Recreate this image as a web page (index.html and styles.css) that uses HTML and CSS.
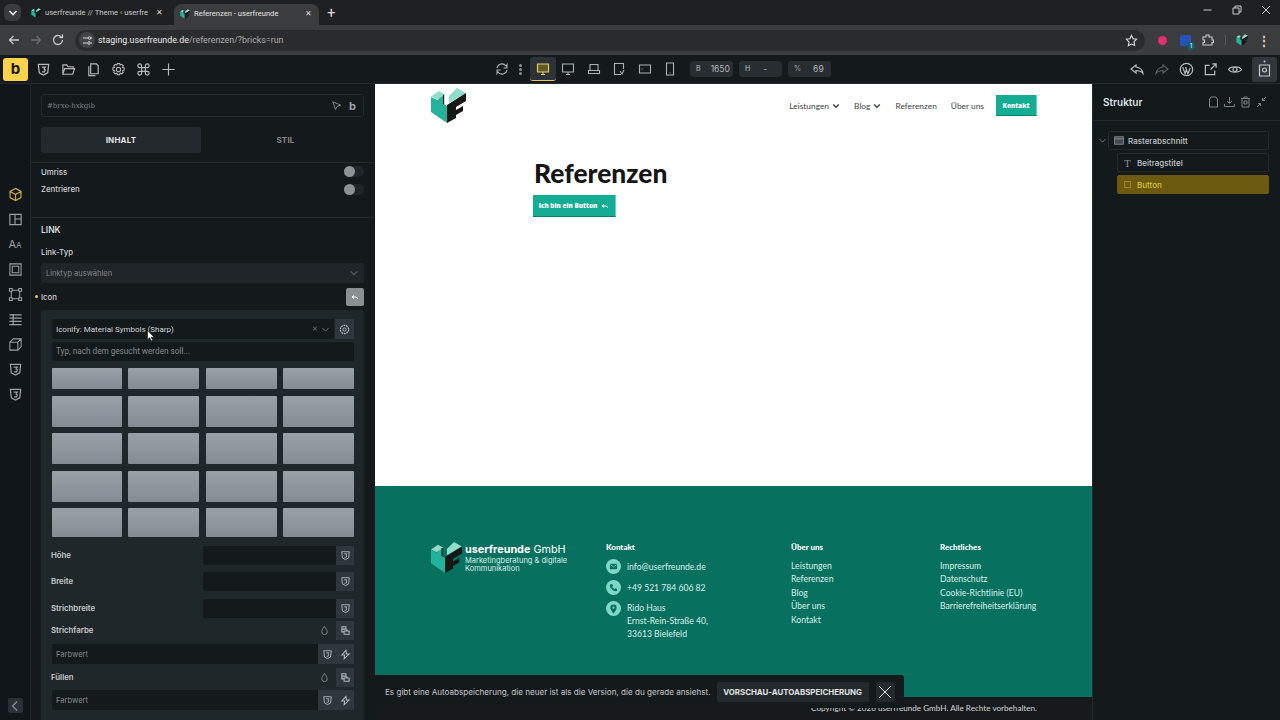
FILE: index.html
```html
<!DOCTYPE html>
<html lang="de">
<head>
    <meta charset="UTF-8">
    <meta name="viewport" content="width=device-width, initial-scale=1.0">
    <title>Referenzen - userfreunde</title>
    <link rel="stylesheet" href="styles.css">
</head>
<body>
    <svg class="defs" xmlns="http://www.w3.org/2000/svg">
        <symbol id="i-shield" viewBox="0 0 16 16"><path d="M2.500 2.500h11l-1 9-4.500 2.500-4.500-2.500z" fill="none" stroke="currentColor" stroke-width="1.300"/><path d="M6 5.500h4l-1.500 2 1.500 1-1 2H6.500" fill="none" stroke="currentColor" stroke-width="1.200"/></symbol>
        <symbol id="i-cube" viewBox="0 0 16 16"><path d="M8 1.500l5.800 3.200v6.600L8 14.500l-5.800-3.200V4.700zM2.200 4.700L8 8l5.800-3.300M8 8v6.500" fill="none" stroke="currentColor" stroke-width="1.300"/></symbol>
        <symbol id="i-chev" viewBox="0 0 10 10"><path d="M1.500 3.200L5 6.800l3.500-3.600" fill="none" stroke="currentColor" stroke-width="1.100"/></symbol>
        <symbol id="i-chev-bold" viewBox="0 0 10 10"><path d="M1.500 3L5 6.500 8.500 3" fill="none" stroke="currentColor" stroke-width="1.700"/></symbol>
        <symbol id="i-drop" viewBox="0 0 12 12"><path d="M6 1.500C4.500 4 3 5.500 3 7.500a3 3 0 0 0 6 0C9 5.500 7.500 4 6 1.500z" fill="none" stroke="currentColor" stroke-width="1"/></symbol>
        <symbol id="i-copy" viewBox="0 0 12 12"><path d="M2 2h4.500v2.500H2zM4.500 6.500h5.500V10H4.500zM2 4.500V7.500h2.500M7.500 4.500V6.500" fill="none" stroke="currentColor" stroke-width="1.100"/></symbol>
        <symbol id="i-bolt" viewBox="0 0 12 12"><path d="M6.500 1.500L2 6.500h3l-.5 4L10 5.500H7z" fill="none" stroke="currentColor" stroke-width="1.100"/></symbol>
        <symbol id="i-logo" viewBox="0 0 36 35"><path d="M1 9v15l16 11V18l-4-2.500V6.500L7.500 12z" fill="#25b29b"/><path d="M1 8.500L9 3l6 3.500-7.500 5z" fill="#8fdccb"/><path d="M13 7l1.200-.6v10.200l-1.200-.7z" fill="#171717"/><path d="M19 8l8-8 9 5-17 10z" fill="#8fdccb"/><path d="M17 35V17L36 5v8L26 19v3l7-4v5l-7 4v3z" fill="#171717"/></symbol>
    </svg>

    <div class="tabstrip">
        <span class="tab-menu"><svg width="10" height="10"><use href="#i-chev-bold"/></svg></span>
        <div class="tab">
            <svg class="favicon" width="10" height="10"><use href="#i-logo"/></svg>
            <span class="tab-title">userfreunde // Theme ‹ userfre</span>
            <span class="tab-close">✕</span>
        </div>
        <div class="tab tab-active">
            <svg class="favicon" width="10" height="10"><use href="#i-logo"/></svg>
            <span class="tab-title">Referenzen - userfreunde</span>
            <span class="tab-close">✕</span>
        </div>
        <span class="tab-new">+</span>
        <div class="win-buttons">
            <svg width="12" height="12" viewBox="0 0 12 12"><path d="M1.500 6h8" stroke="#c9cbcc" fill="none"/></svg>
            <svg width="12" height="12" viewBox="0 0 12 12"><path d="M2 4h6v6H2zM4 4V2h6v6H8" stroke="#c9cbcc" fill="none"/></svg>
            <svg width="12" height="12" viewBox="0 0 12 12"><path d="M2 2l8 8M10 2l-8 8" stroke="#c9cbcc" fill="none"/></svg>
        </div>
    </div>

    <div class="urlbar">
        <svg width="14" height="14" viewBox="0 0 14 14"><path d="M12 7H2.500M6.500 3L2.500 7l4 4" stroke="#c7c9ca" stroke-width="1.300" fill="none"/></svg>
        <svg class="nav-gap" width="14" height="14" viewBox="0 0 14 14"><path d="M2 7h9.500M7.500 3l4 4-4 4" stroke="#6a6c6d" stroke-width="1.300" fill="none"/></svg>
        <svg class="nav-gap" width="14" height="14" viewBox="0 0 14 14"><path d="M11.500 7a4.500 4.500 0 1 1-1.300-3.200M11.500 1.500v3h-3" stroke="#c7c9ca" stroke-width="1.300" fill="none"/></svg>
        <div class="omnibox">
            <span class="site-icon"><svg width="11" height="11" viewBox="0 0 11 11"><path d="M1 3h5M9 8h1M1 8h4M9 3h1" stroke="#d5d6d7" fill="none"/><circle cx="7.500" cy="3" r="1.300" stroke="#d5d6d7" fill="none"/><circle cx="7" cy="8" r="1.300" stroke="#d5d6d7" fill="none"/></svg></span>
            <span class="url"><b>staging.userfreunde.de</b>/referenzen/?bricks=run</span>
            <svg class="star" width="13" height="13" viewBox="0 0 14 14"><path d="M7 1.500l1.700 3.600 3.800.5-2.800 2.700.7 3.900L7 10.800l-3.400 1.900.7-3.900L1.500 5.600l3.800-.5z" stroke="#d8d9da" stroke-width="1.200" fill="none"/></svg>
        </div>
        <div class="ext-icons">
            <span class="ext-pink"></span>
            <span class="ext-blue"><i>1</i></span>
            <svg width="14" height="14" viewBox="0 0 14 14"><path d="M2 4h3V2h3v2h3v3h1.500v2.500H11V12H2V9.500h1.500V7H2z" stroke="#c9cbcc" stroke-width="1.100" fill="none"/></svg>
            <span class="ext-sep"></span>
            <svg width="12" height="12"><use href="#i-logo"/></svg>
            <span class="ext-dots">⋮</span>
        </div>
    </div>

    <div class="builder-bar">
        <div class="bar-left">
            <span class="bricks-logo">b</span>
            <svg class="bar-icon" width="15" height="15"><use href="#i-shield"/></svg>
            <svg class="bar-icon" width="15" height="15" viewBox="0 0 16 16"><path d="M2 13V3h4l1.500 2H13v2M2 13l2-6h10.500l-2 6z" fill="none" stroke="currentColor" stroke-width="1.200"/></svg>
            <svg class="bar-icon" width="15" height="15" viewBox="0 0 16 16"><path d="M5 2h6l2 2v8.500H5zM3 4.500V14.500h7" fill="none" stroke="currentColor" stroke-width="1.200"/></svg>
            <svg class="bar-icon" width="15" height="15" viewBox="0 0 16 16"><circle cx="8" cy="8" r="2.300" fill="none" stroke="currentColor" stroke-width="1.100"/><path d="M6.800 1.500h2.400l.5 1.800 1.700-.8 1.700 1.700-.9 1.700 1.800.5v2.400l-1.800.6.900 1.600-1.700 1.700-1.700-.9-.5 1.800H6.800l-.5-1.800-1.700.9-1.700-1.700.9-1.600-1.800-.6V6.400l1.800-.5-.9-1.700 1.700-1.700 1.700.8z" fill="none" stroke="currentColor" stroke-width="1.100"/></svg>
            <svg class="bar-icon" width="15" height="15" viewBox="0 0 16 16"><path d="M6 6h4v4H6zM6 6H4a2 2 0 1 1 2-2zM10 6V4a2 2 0 1 1 2 2zM10 10h2a2 2 0 1 1-2 2zM6 10v2a2 2 0 1 1-2-2z" fill="none" stroke="currentColor" stroke-width="1.200"/></svg>
            <svg class="bar-icon" width="15" height="15" viewBox="0 0 16 16"><path d="M8 1.500v13M1.500 8h13" fill="none" stroke="currentColor" stroke-width="1.200"/></svg>
        </div>
        <div class="bar-center">
            <svg class="bar-icon-sm" width="14" height="14" viewBox="0 0 14 14"><path d="M2 6a5 5 0 0 1 9-2l1-1.500V6H8.500M12 8a5 5 0 0 1-9 2l-1 1.500V8h3.500" fill="none" stroke="currentColor" stroke-width="1.100"/></svg>
            <span class="dots"><i></i><i></i><i></i></span>
            <span class="device device-active"><svg width="14" height="14" viewBox="0 0 14 14"><path d="M1.500 2h11v8h-11zM5 12.500h4M7 10v2.500" fill="#5f5a2e" stroke="#e8c94e" stroke-width="1.200"/></svg></span>
            <span class="device"><svg width="14" height="14" viewBox="0 0 14 14"><path d="M1.500 2h11v8h-11zM5 12.500h4M7 10v2.500" fill="none" stroke="currentColor" stroke-width="1.100"/></svg></span>
            <span class="device"><svg width="14" height="14" viewBox="0 0 14 14"><path d="M3 2.500h8v6H3zM1.500 8.500h11v3h-11z" fill="none" stroke="currentColor" stroke-width="1.100"/></svg></span>
            <span class="device"><svg width="14" height="14" viewBox="0 0 14 14"><path d="M9 12.500H2.500v-11h9V7M8 9l2 3 2-4" fill="none" stroke="currentColor" stroke-width="1.100"/></svg></span>
            <span class="device"><svg width="14" height="14" viewBox="0 0 14 14"><path d="M1.500 3h11v8h-11zM3.500 7h1" fill="none" stroke="currentColor" stroke-width="1.100"/></svg></span>
            <span class="device"><svg width="14" height="14" viewBox="0 0 14 14"><path d="M3.500 1h7v12h-7zM6.500 11h1" fill="none" stroke="currentColor" stroke-width="1.100"/></svg></span>
            <div class="size-fields">
                <span class="size-field size-b"><em>B</em>1650</span>
                <span class="size-field size-h"><em>H</em><u>-</u></span>
                <span class="size-field size-p"><em>%</em>69</span>
            </div>
        </div>
        <div class="bar-right">
            <svg class="bar-icon" width="16" height="15" viewBox="0 0 16 15"><path d="M7 3L2 7l5 4V8.500c3 0 5 .5 7 3-.5-4-3-6-7-6.500zM7 3" fill="none" stroke="currentColor" stroke-width="1.200"/></svg>
            <svg class="bar-icon bar-dim" width="16" height="15" viewBox="0 0 16 15"><path d="M9 3l5 4-5 4V8.500c-3 0-5 .5-7 3 .5-4 3-6 7-6.500z" fill="none" stroke="currentColor" stroke-width="1.200"/></svg>
            <svg class="bar-icon" width="15" height="15" viewBox="0 0 16 16"><circle cx="8" cy="8" r="6.600" fill="none" stroke="currentColor" stroke-width="1.300"/><path d="M4 5.500l2.500 7 1.500-4.500-1-2.500M7 5.500l2.500 7L12 6.500" fill="none" stroke="currentColor" stroke-width="1.300"/></svg>
            <svg class="bar-icon" width="15" height="15" viewBox="0 0 16 16"><path d="M7 3.500H2.500v10h10V9M8 8l6-6M10 2h4v4" fill="none" stroke="currentColor" stroke-width="1.300"/></svg>
            <svg class="bar-icon" width="16" height="15" viewBox="0 0 16 15"><path d="M1.500 7.500C4 4 12 4 14.500 7.500 12 11 4 11 1.500 7.500z" fill="none" stroke="currentColor" stroke-width="1.200"/><circle cx="8" cy="7.500" r="2" fill="none" stroke="currentColor" stroke-width="1.200"/></svg>
            <span class="structure-toggle"><svg width="15" height="18" viewBox="0 0 15 18"><circle cx="7.500" cy="1.500" r="1" fill="currentColor"/><path d="M2.500 5h10v11h-10z" fill="none" stroke="currentColor" stroke-width="1.200"/><circle cx="7.500" cy="10" r="2" fill="none" stroke="currentColor" stroke-width="1.200"/></svg></span>
        </div>
    </div>

    <div class="workspace">
        <nav class="rail">
            <svg class="rail-icon rail-active" width="15" height="15"><use href="#i-cube"/></svg>
            <svg class="rail-icon" width="15" height="15" viewBox="0 0 16 16"><path d="M2 2.500h12v11H2zM7.500 2.500v11M7.500 7.500H14" fill="none" stroke="currentColor" stroke-width="1.200"/></svg>
            <span class="rail-text">A<small>A</small></span>
            <svg class="rail-icon" width="15" height="15" viewBox="0 0 16 16"><path d="M2 2h12v12H2zM4.500 4.500h7v7h-7z" fill="none" stroke="currentColor" stroke-width="1.100"/></svg>
            <svg class="rail-icon" width="15" height="15" viewBox="0 0 16 16"><path d="M4 3.500h8M4 12.500h8M3.500 4v8M12.500 4v8M1.500 1.500h3v3h-3zM11.500 1.500h3v3h-3zM1.500 11.500h3v3h-3zM11.500 11.500h3v3h-3z" fill="none" stroke="currentColor" stroke-width="1.100"/></svg>
            <svg class="rail-icon" width="15" height="15" viewBox="0 0 16 16"><path d="M1.500 3h13M1.500 6.500h13M1.500 10h13M1.500 13.500h13M5.500 2v12" fill="none" stroke="currentColor" stroke-width="1.300"/></svg>
            <svg class="rail-icon" width="15" height="15" viewBox="0 0 16 16"><path d="M2 5.500l3.500-3.500H14v8.500L10.500 14H2zM2 5.500h8.500V14M10.500 5.500L14 2" fill="none" stroke="currentColor" stroke-width="1.100"/></svg>
            <svg class="rail-icon" width="15" height="15"><use href="#i-shield"/></svg>
            <svg class="rail-icon" width="15" height="15"><use href="#i-shield"/></svg>
            <span class="rail-collapse"><svg width="10" height="12" viewBox="0 0 10 12"><path d="M7 1.500L2.500 6 7 10.500" fill="none" stroke="currentColor" stroke-width="1.100"/></svg></span>
        </nav>

        <aside class="panel">
            <div class="panel-head">
                <div class="id-field">
                    <span class="id-text">#brxe-hxkgib</span>
                    <svg width="11" height="11" viewBox="0 0 12 12"><path d="M2 2l8.500 3.500L6.500 7 5 10.500z" fill="none" stroke="#8b8e90"/></svg>
                    <span class="id-b">b</span>
                </div>
                <div class="panel-tabs">
                    <span class="panel-tab panel-tab-on">INHALT</span>
                    <span class="panel-tab">STIL</span>
                </div>
            </div>

            <div class="toggle-group">
                <div class="toggle-row"><span>Umriss</span><i class="toggle"></i></div>
                <div class="toggle-row"><span>Zentrieren</span><i class="toggle"></i></div>
            </div>

            <div class="link-group">
                <h4 class="group-title">LINK</h4>
                <div class="field-label">Link-Typ</div>
                <div class="select">Linktyp auswählen<svg width="10" height="10"><use href="#i-chev"/></svg></div>
                <div class="icon-row">
                    <span class="field-label">Icon</span>
                    <span class="icon-pick"><svg width="8" height="6" viewBox="0 0 8 6"><path d="M1 3l2-1.500M1 3l2 1.500M1 3h4l2 1.500" fill="none" stroke="#fff"/></svg></span>
                </div>

                <div class="icon-popup">
                    <div class="lib-row">
                        <div class="lib-select">
                            <span>Iconify: Material Symbols (Sharp)</span>
                            <em>✕</em>
                            <svg width="9" height="9"><use href="#i-chev"/></svg>
                        </div>
                        <span class="lib-gear"><svg width="11" height="11" viewBox="0 0 12 12"><circle cx="6" cy="6" r="1.800" fill="none" stroke="currentColor"/><circle cx="6" cy="6" r="4.500" fill="none" stroke="currentColor" stroke-width="1.300" stroke-dasharray="2 .8"/></svg></span>
                    </div>
                    <div class="lib-search">Typ, nach dem gesucht werden soll...</div>
                    <div class="tile-grid">
                        <i></i><i></i><i></i><i></i>
                        <i></i><i></i><i></i><i></i>
                        <i></i><i></i><i></i><i></i>
                        <i></i><i></i><i></i><i></i>
                        <i></i><i></i><i></i><i></i>
                    </div>

                    <div class="num-row"><span>Höhe</span><div class="num-input"></div><b><svg width="11" height="11"><use href="#i-shield"/></svg></b></div>
                    <div class="num-row"><span>Breite</span><div class="num-input"></div><b><svg width="11" height="11"><use href="#i-shield"/></svg></b></div>
                    <div class="num-row num-last"><span>Strichbreite</span><div class="num-input"></div><b><svg width="11" height="11"><use href="#i-shield"/></svg></b></div>

                    <div class="color-head color-first"><span>Strichfarbe</span><svg width="11" height="11"><use href="#i-drop"/></svg><b><svg width="11" height="11"><use href="#i-copy"/></svg></b></div>
                    <div class="color-input"><span>Farbwert</span><b><svg width="11" height="11"><use href="#i-shield"/></svg></b><b><svg width="11" height="11"><use href="#i-bolt"/></svg></b></div>
                    <div class="color-head"><span>Füllen</span><svg width="11" height="11"><use href="#i-drop"/></svg><b><svg width="11" height="11"><use href="#i-copy"/></svg></b></div>
                    <div class="color-input color-last"><span>Farbwert</span><b><svg width="11" height="11"><use href="#i-shield"/></svg></b><b><svg width="11" height="11"><use href="#i-bolt"/></svg></b></div>
                </div>
            </div>

            <svg class="mouse-cursor" width="8" height="12" viewBox="0 0 8 12"><path d="M.5.500v9l2.200-1.800 1.500 3.300 1.500-.7-1.500-3.100h3z" fill="#fff" stroke="#111" stroke-width=".6"/></svg>
        </aside>

        <main class="canvas">
            <header class="site-header">
                <svg class="site-logo" width="36" height="35"><use href="#i-logo"/></svg>
                <nav class="site-nav">
                    <a>Leistungen <svg width="8" height="8"><use href="#i-chev-bold"/></svg></a>
                    <a>Blog <svg width="8" height="8"><use href="#i-chev-bold"/></svg></a>
                    <a>Referenzen</a>
                    <a>Über uns</a>
                    <span class="btn-green btn-contact">Kontakt</span>
                </nav>
            </header>

            <section class="page-body">
                <h1>Referenzen</h1>
                <span class="btn-green btn-main">Ich bin ein Button <svg width="8" height="6" viewBox="0 0 8 6"><path d="M1 3l2-1.500M1 3l2 1.500M1 3h4l2 1.500" fill="none" stroke="#fff"/></svg></span>
            </section>

            <footer class="site-footer">
                <div class="footer-cols">
                    <div class="footer-brand">
                        <svg width="32" height="31"><use href="#i-logo"/></svg>
                        <div class="brand-text">
                            <div class="brand-name"><b>userfreunde</b> GmbH</div>
                            <div class="brand-sub">Marketingberatung &amp; digitale Kommunikation</div>
                        </div>
                    </div>
                    <div class="footer-col">
                        <h5>Kontakt</h5>
                        <div class="contact-row"><span class="contact-dot"><svg width="9" height="9" viewBox="0 0 10 10"><path d="M1 2h8v6H1z" fill="#08705e"/><path d="M1.500 3L5 5.500 8.500 3" stroke="#7fd8c6" fill="none" stroke-width=".8"/></svg></span>info@userfreunde.de</div>
                        <div class="contact-row"><span class="contact-dot"><svg width="9" height="9" viewBox="0 0 10 10"><path d="M2 1l1.800.3.600 2-1 1c.6 1.200 1.300 1.900 2.400 2.400l1-1 2 .6L9 8.500C8.500 9 7.500 9.300 6.500 9 3.800 8 2 6.200 1 3.500.8 2.500 1.300 1.500 2 1z" fill="#08705e"/></svg></span>+49 521 784 606 82</div>
                        <div class="contact-row contact-addr"><span class="contact-dot"><svg width="9" height="10" viewBox="0 0 10 11"><path d="M5 .5a3.500 3.500 0 0 1 3.500 3.500C8.500 6.500 5 10.500 5 10.500S1.500 6.500 1.500 4A3.500 3.500 0 0 1 5 .5z" fill="#08705e"/><circle cx="5" cy="4" r="1.200" fill="#7fd8c6"/></svg></span><span>Rido Haus<br>Ernst-Rein-Straße 40,<br>33613 Bielefeld</span></div>
                    </div>
                    <div class="footer-col">
                        <h5>Über uns</h5>
                        <ul>
                            <li>Leistungen</li>
                            <li>Referenzen</li>
                            <li>Blog</li>
                            <li>Über uns</li>
                            <li>Kontakt</li>
                        </ul>
                    </div>
                    <div class="footer-col">
                        <h5>Rechtliches</h5>
                        <ul>
                            <li>Impressum</li>
                            <li>Datenschutz</li>
                            <li>Cookie-Richtlinie (EU)</li>
                            <li>Barrierefreiheitserklärung</li>
                        </ul>
                    </div>
                </div>
                <div class="copyright">Copyright © 2026 userfreunde GmbH. Alle Rechte vorbehalten.</div>
            </footer>

            <div class="autosave">
                <span>Es gibt eine Autoabspeicherung, die neuer ist als die Version, die du gerade ansiehst.</span>
                <span class="autosave-btn">VORSCHAU-AUTOABSPEICHERUNG</span>
                <span class="autosave-close"><svg width="14" height="14" viewBox="0 0 14 14"><path d="M1 1l12 12M13 1L1 13" stroke="#e4e5e6" fill="none"/></svg></span>
            </div>
        </main>

        <aside class="structure">
            <div class="structure-head">
                <span>Struktur</span>
                <div class="structure-tools">
                    <svg width="11" height="12" viewBox="0 0 11 12"><path d="M1.500 3L3 1h5l1.500 2v8h-8z" fill="none" stroke="currentColor"/></svg>
                    <svg width="11" height="12" viewBox="0 0 11 12"><path d="M5.500 1v6M3 5l2.500 2.500L8 5M.5 8v2.500h10V8" fill="none" stroke="currentColor"/></svg>
                    <svg width="11" height="12" viewBox="0 0 11 12"><path d="M1 2.500h9M4 2.500V1h3v1.500M2 2.500v8.500h7V2.500M4 5h3v3H4z" fill="none" stroke="currentColor"/></svg>
                    <svg width="11" height="12" viewBox="0 0 11 12"><path d="M1 11l3.500-3.500M2 7.500h2.500V10M10 1L6.500 4.500M6.500 2v2.500H9" fill="none" stroke="currentColor"/></svg>
                </div>
            </div>
            <div class="tree">
                <div class="tree-row">
                    <svg class="tree-chev" width="9" height="11"><use href="#i-chev"/></svg>
                    <div class="tree-item"><svg width="10" height="9" viewBox="0 0 12 10"><path d="M.5.500h11v9H.5z" fill="#454b4f" stroke="#8b9094"/><path d="M.5 3h11" stroke="#8b9094"/></svg>Rasterabschnitt</div>
                </div>
                <div class="tree-item tree-child"><span class="tree-t">T</span>Beitragstitel</div>
                <div class="tree-item tree-child tree-selected"><svg width="7" height="7" viewBox="0 0 9 9"><path d="M.5.500h8v8h-8z" fill="none" stroke="#b79a1f"/></svg>Button</div>
            </div>
        </aside>
    </div>
</body>
</html>
```

FILE: styles.css
```css
* {
    margin: 0;
    padding: 0;
    box-sizing: border-box;
}

html, body {
    width: 1280px;
    height: 720px;
    overflow: hidden;
}

body {
    font-family: Inter, "Liberation Sans", sans-serif;
    background: #14191c;
    color: #d5d7d8;
    display: grid;
    grid-template-rows: 25px 30px 29px 636px;
}

.defs {
    display: none;
}

/* browser chrome */
.tabstrip {
    background: #1f2021;
    display: flex;
    align-items: flex-end;
    padding-left: 4px;
    font: 7.600px Roboto, sans-serif;
    color: #c8c9ca;
}

.tab-menu {
    width: 17px;
    height: 17px;
    margin-bottom: 4px;
    border-radius: 6px;
    background: #3a3b3c;
    display: flex;
    align-items: center;
    justify-content: center;
    color: #e2e3e4;
}

.tab {
    width: 143px;
    height: 21px;
    display: flex;
    align-items: center;
    padding: 0 4px 4px 7px;
    gap: 4px;
    margin-left: 3px;
}

.tab-active {
    width: 145px;
    background: #3b3c3d;
    border-radius: 8px 8px 0 0;
    color: #e4e5e6;
    margin-left: 7px;
    padding: 0 7px 2px 6px;
}

.tab-title {
    flex: 1;
    white-space: nowrap;
    overflow: hidden;
}

.tab-close {
    font-size: 7.500px;
    color: #d8d9da;
}

.tab-new {
    font-size: 15px;
    margin: 0 0 3px 8px;
    color: #d8d9da;
    line-height: 17px;
}

.win-buttons {
    margin-left: auto;
    display: flex;
    gap: 17px;
    padding: 0 8px 6px 0;
    align-self: center;
}

.win-buttons svg {
    display: block;
}

.urlbar {
    background: #3b3c3d;
    display: flex;
    align-items: center;
    padding-left: 7px;
}

.nav-gap {
    margin-left: 8px;
}

.omnibox {
    margin-left: 10px;
    width: 1070px;
    height: 21px;
    border-radius: 11px;
    background: #2a2b2c;
    display: flex;
    align-items: center;
    padding: 0 7px 0 4px;
}

.site-icon {
    width: 16px;
    height: 16px;
    border-radius: 50%;
    background: #434445;
    display: flex;
    align-items: center;
    justify-content: center;
}

.url {
    margin-left: 3px;
    font: 8.850px Roboto, sans-serif;
    color: #a9abac;
}

.url b {
    font-weight: 400;
    color: #e6e7e8;
}

.star {
    margin-left: auto;
}

.ext-icons {
    margin-left: 13px;
    display: flex;
    align-items: center;
    gap: 10px;
}

.ext-pink {
    width: 9px;
    height: 9px;
    border-radius: 50%;
    background: #e0306d;
}

.ext-blue {
    width: 11px;
    height: 11px;
    border-radius: 2px;
    background: #2454b8;
    position: relative;
    margin-left: 3px;
}

.ext-blue i {
    position: absolute;
    right: -4px;
    bottom: -4px;
    width: 8px;
    height: 8px;
    border-radius: 50%;
    background: #14606e;
    color: #fff;
    font-size: 6px;
    font-style: normal;
    text-align: center;
    line-height: 8px;
}

.ext-sep {
    width: 1px;
    height: 10px;
    background: #5a5b5c;
}

.ext-dots {
    font-size: 12px;
    font-weight: 700;
    color: #d8d9da;
}

/* builder toolbar */
.builder-bar {
    background: #14191c;
    display: grid;
    grid-template-columns: 375px 717px 188px;
    align-items: center;
    border-bottom: 1px solid #252b2f;
}

.bar-left, .bar-center, .bar-right {
    display: flex;
    align-items: center;
}

.bricks-logo {
    margin-left: 3px;
    width: 25px;
    height: 23px;
    background: #fbd24c;
    border-radius: 3px;
    color: #14191c;
    font: 700 15px/21px Inter, sans-serif;
    text-align: center;
}

.bar-icon {
    color: #b9bcbe;
    margin-left: 10px;
}

.bar-left .bar-icon:first-of-type {
    margin-left: 8px;
}

.bar-center {
    color: #aeb2b4;
    padding-left: 120px;
}

.dots {
    display: flex;
    flex-direction: column;
    gap: 1px;
    margin: 0 8px 0 10px;
}

.dots i {
    width: 3px;
    height: 3px;
    border-radius: 50%;
    background: #8b8f92;
}

.device {
    width: 25.500px;
    height: 24px;
    display: flex;
    align-items: center;
    justify-content: center;
}

.device-active {
    background: #2c3237;
    border-radius: 3px;
    border-bottom: 1px solid #e8c94e;
}

.size-fields {
    display: flex;
    gap: 6px;
    margin-left: 7px;
}

.size-field {
    height: 16px;
    width: 43px;
    border-radius: 3px;
    background: #272d31;
    color: #b5b8ba;
    font-size: 8.500px;
    line-height: 16px;
    display: flex;
    gap: 10px;
    padding-left: 6px;
}

.size-field em {
    font-style: normal;
    font-size: 7px;
    font-weight: 700;
    color: #8f9395;
}

.size-p {
    gap: 12px;
}

.size-h u {
    text-decoration: none;
    margin-left: 3px;
}

.bar-right {
    justify-content: flex-end;
    gap: 9px;
    padding-right: 3px;
}

.bar-right .bar-icon {
    margin: 0;
}

.bar-dim {
    color: #595e62 !important;
}

.structure-toggle {
    width: 25px;
    height: 25px;
    background: #30363b;
    border-radius: 3px;
    color: #c3c6c8;
    display: flex;
    align-items: center;
    justify-content: center;
}

/* main area */
.workspace {
    display: grid;
    grid-template-columns: 31px 344px 717px 188px;
    height: 636px;
}

.rail {
    background: #10161a;
    border-right: 1px solid #20272b;
    display: flex;
    flex-direction: column;
    align-items: center;
    padding: 103px 0 0;
    gap: 10px;
    color: #a8acae;
}

.rail-icon {
    display: block;
    color: #9da1a4;
}

.rail-active {
    color: #c9a93c;
}

.rail-text {
    font-size: 11px;
    height: 15px;
    line-height: 15px;
    color: #9da1a4;
}

.rail-text small {
    font-size: 8px;
}

.rail-collapse {
    margin-top: auto;
    margin-bottom: 7px;
    width: 15px;
    height: 15px;
    background: #2a3136;
    border-radius: 2px;
    display: flex;
    align-items: center;
    justify-content: center;
    color: #8f9498;
}

.panel {
    background: #14191c;
    overflow: hidden;
    position: relative;
}

.mouse-cursor {
    position: absolute;
    left: 116px;
    top: 246px;
}

.panel-head {
    padding: 10px 11px 8px 10px;
    border-bottom: 1px solid #252b2f;
    height: 79px;
}

.id-field {
    height: 23px;
    border: 1px solid #252b2f;
    border-radius: 3px;
    display: flex;
    align-items: center;
    padding: 0 7px 0 5px;
    gap: 7px;
}

.id-text {
    flex: 1;
    font: 7px "DejaVu Serif", serif;
    color: #7c8083;
}

.id-b {
    font-weight: 700;
    font-size: 11px;
    color: #9ea2a4;
}

.panel-tabs {
    display: flex;
    margin-top: 10px;
}

.panel-tab {
    width: 160px;
    height: 26px;
    text-align: center;
    font-size: 8px;
    font-weight: 700;
    line-height: 26px;
    color: #84888a;
    letter-spacing: .2px;
}

.panel-tab + .panel-tab {
    width: 163px;
    padding-left: 6px;
}

.panel-tab-on {
    background: #23292d;
    border-radius: 2px;
    color: #e0e2e3;
}

.toggle-group {
    height: 55px;
    border-bottom: 1px solid #252b2f;
    padding: 0 11px 0 10px;
}

.toggle-row {
    height: 17px;
    display: flex;
    justify-content: space-between;
    align-items: center;
    font-size: 7.800px;
    font-weight: 500;
    color: #d0d2d3;
    margin-bottom: 0.5px;
}

.toggle {
    width: 20px;
    height: 11px;
    border-radius: 6px;
    background: #1f2528;
    position: relative;
}

.toggle::before {
    content: "";
    position: absolute;
    left: 0;
    top: 0;
    width: 11px;
    height: 11px;
    border-radius: 50%;
    background: #8d9295;
}

.link-group {
    padding: 7px 11px 0 10px;
}

.group-title {
    font-size: 8.500px;
    font-weight: 600;
    color: #d7d9da;
}

.field-label {
    font-size: 7.800px;
    font-weight: 500;
    color: #d0d2d3;
}

.group-title + .field-label {
    margin-top: 12px;
}

.select {
    margin-top: 6px;
    height: 20px;
    background: #1f2528;
    border-radius: 2px;
    color: #85898c;
    font-size: 7.500px;
    display: flex;
    align-items: center;
    justify-content: space-between;
    padding: 0 5px;
}

.select svg {
    color: #5f6366;
}

.icon-row {
    margin-top: 5px;
    height: 18px;
    display: flex;
    justify-content: space-between;
    align-items: center;
    position: relative;
}

.icon-row::before {
    content: "";
    position: absolute;
    left: -6px;
    top: 7px;
    width: 3px;
    height: 3px;
    border-radius: 50%;
    background: #e8cf55;
}

.icon-pick {
    width: 18px;
    height: 18px;
    background: #8a8f92;
    border-radius: 2px;
    display: flex;
    align-items: center;
    justify-content: center;
}

.icon-popup {
    margin-top: 4px;
    background: #20272b;
    border-radius: 3px 3px 0 0;
    padding: 9px 10px 0 11px;
    height: 420px;
}

.lib-row {
    display: flex;
    height: 20px;
    gap: 1px;
}

.lib-select {
    flex: 1;
    background: #14191c;
    display: flex;
    align-items: center;
    padding: 0 4px;
    font: 400 8px Roboto, sans-serif;
    color: #d0d2d4;
    gap: 3px;
}

.lib-select span {
    flex: 1;
}

.lib-select em {
    font-style: normal;
    font-size: 7px;
    color: #6e7275;
}

.lib-select svg {
    color: #6e7275;
}

.lib-gear {
    width: 19px;
    background: #30373c;
    display: flex;
    align-items: center;
    justify-content: center;
    color: #b5b9bb;
}

.lib-search {
    margin-top: 3px;
    height: 19px;
    background: #14191c;
    border-radius: 2px;
    padding-left: 4px;
    font: 8.200px/19px Roboto, sans-serif;
    color: #85898c;
}

.tile-grid {
    margin-top: 7px;
    display: grid;
    grid-template-columns: 70px 71px 71px 71px;
    grid-template-rows: 21px 31px 31px 31px 29px;
    gap: 6.500px 6.330px;
    height: 169px;
}

.tile-grid i {
    background: linear-gradient(#99a1a8, #858c91);
    border-radius: 1px;
}

.num-row {
    display: flex;
    align-items: center;
    height: 20px;
    margin-top: 6px;
    font-size: 7.800px;
    font-weight: 600;
    color: #c8cacc;
}

.tile-grid + .num-row {
    margin-top: 8px;
}

.num-last {
    margin-top: 7px;
}

.num-row span {
    width: 152px;
    flex: none;
    margin-left: -1px;
}

.num-input {
    width: 133px;
    height: 19px;
    background: #14191c;
    border-radius: 2px 0 0 2px;
}

.num-row b, .color-input b, .color-head b {
    width: 18px;
    height: 19px;
    background: #30373c;
    display: flex;
    align-items: center;
    justify-content: center;
    color: #b5b9bb;
}

.color-head {
    display: flex;
    align-items: center;
    height: 18px;
    margin-top: 4px;
    font-size: 7.800px;
    font-weight: 600;
    color: #c8cacc;
}

.color-head span {
    flex: 1;
    margin-left: -1px;
}

.color-first {
    margin-top: 3px;
}

.color-head svg {
    color: #85898c;
}

.color-head > svg {
    margin-right: 6px;
}

.color-head b svg {
    color: #b5b9bb;
}

.color-input {
    display: flex;
    align-items: center;
    height: 20px;
    margin-top: 5px;
    background: #14191c;
    border-radius: 2px;
    font-size: 7.600px;
    color: #85898c;
}

.color-last {
    margin-top: 4px;
}

.color-input span {
    flex: 1;
    padding-left: 4px;
}

.color-input b {
    height: 20px;
}

/* the page in the canvas */
.canvas {
    background: #fff;
    position: relative;
    display: flex;
    flex-direction: column;
    font-family: Lato, sans-serif;
    overflow: hidden;
}

.site-header {
    height: 71px;
    padding: 4px 55px 0;
    display: flex;
    justify-content: space-between;
    align-items: flex-start;
}

.site-nav {
    display: flex;
    align-items: center;
    gap: 14px;
    margin-top: 7px;
    font-size: 8.400px;
    color: #3f4345;
}

.site-nav a {
    display: flex;
    align-items: center;
    gap: 3px;
}

.btn-green {
    background: #14ad94;
    color: #fff;
    font: 800 6.400px "Open Sans", sans-serif;
    border-right: 1px solid #5fd6c2;
    border-bottom: 1px solid #0c7e6c;
}

.btn-contact {
    width: 41px;
    height: 21px;
    display: flex;
    align-items: center;
    justify-content: center;
    margin-left: -2px;
}

.page-body {
    height: 331px;
    padding-left: 158px;
}

.page-body h1 {
    font: 900 26.400px/36px Lato, sans-serif;
    color: #151515;
    margin-left: 1px;
}

.btn-main {
    margin-top: 4px;
    width: 83px;
    height: 22px;
    display: flex;
    align-items: center;
    justify-content: center;
    gap: 4px;
}

.site-footer {
    flex: 1;
    background: #08705e;
    color: #d9f1ec;
    display: flex;
    flex-direction: column;
}

.footer-cols {
    height: 211px;
    padding: 56px 55px 0;
    display: grid;
    grid-template-columns: 176px 185px 149px 1fr;
    font-size: 8.600px;
}

.footer-brand {
    display: flex;
    gap: 3px;
    align-items: flex-start;
}

.brand-name {
    font: 10.800px/13px Inter, sans-serif;
    color: #fff;
    margin-top: 1px;
}

.brand-sub {
    font: 7.500px/8px Inter, sans-serif;
    width: 110px;
    margin-top: 1px;
}

.footer-col h5 {
    font-size: 8px;
    font-weight: 900;
    color: #fff;
    margin-bottom: 7px;
    height: 10px;
    line-height: 10px;
}

.footer-col ul {
    list-style: none;
    margin-top: 8px;
}

.footer-col li {
    height: 13.400px;
    line-height: 13.400px;
}

.contact-row {
    display: flex;
    align-items: center;
    gap: 6px;
    height: 15px;
    margin-bottom: 6px;
}

.contact-addr {
    align-items: flex-start;
    line-height: 13px;
}

.contact-addr > span:last-child {
    padding-top: 1px;
}

.contact-dot {
    width: 15px;
    height: 15px;
    border-radius: 50%;
    background: #7fd8c6;
    display: flex;
    align-items: center;
    justify-content: center;
    flex: none;
}

.copyright {
    flex: 1;
    background: #161a1c;
    color: #d4d6d7;
    font-size: 8.150px;
    text-align: right;
    padding: 6px 55px 0 0;
}

.autosave {
    position: absolute;
    left: 0;
    bottom: 12px;
    width: 529px;
    height: 33px;
    background: #14191c;
    border-radius: 0 3px 3px 0;
    display: flex;
    align-items: center;
    padding-left: 10px;
    font: 8.100px Inter, sans-serif;
    color: #c5c7c9;
    white-space: nowrap;
}

.autosave-btn {
    margin-left: 6px;
    height: 20px;
    width: 152px;
    text-align: center;
    background: #23292d;
    border-radius: 2px;
    color: #e0e2e3;
    font-weight: 700;
    font-size: 7.900px;
    line-height: 20px;
}

.autosave-close {
    margin-left: 7px;
    width: 19px;
    height: 20px;
    background: #23292d;
    border-radius: 2px;
    display: flex;
    align-items: center;
    justify-content: center;
}

/* structure panel */
.structure {
    background: #14191c;
    border-left: 1px solid #23292d;
}

.structure-head {
    height: 37px;
    border-bottom: 1px solid #23292d;
    display: flex;
    align-items: center;
    justify-content: space-between;
    padding: 0 13px 0 10px;
    font-size: 10px;
    font-weight: 600;
    color: #dfe1e2;
}

.structure-tools {
    display: flex;
    gap: 5px;
    color: #7d8184;
}

.tree {
    padding: 10px 11px 0 5px;
}

.tree-row {
    display: flex;
    align-items: center;
    gap: 1px;
}

.tree-chev {
    color: #6f7376;
}

.tree-item {
    flex: 1;
    height: 19px;
    border: 1px solid #23292d;
    border-radius: 2px;
    display: flex;
    align-items: center;
    gap: 4px;
    padding-left: 5px;
    font-size: 8px;
    font-weight: 500;
    color: #c3c6c8;
}

.tree-child {
    margin: 3px 0 0 19px;
    padding-left: 6px;
    gap: 6px;
}

.tree-t {
    font: 11px "Liberation Serif", serif;
    color: #8b8f92;
    width: 7px;
}

.tree-selected {
    background: #6b5a10;
    border-color: #6b5a10;
    color: #dcbf3c;
}
```
